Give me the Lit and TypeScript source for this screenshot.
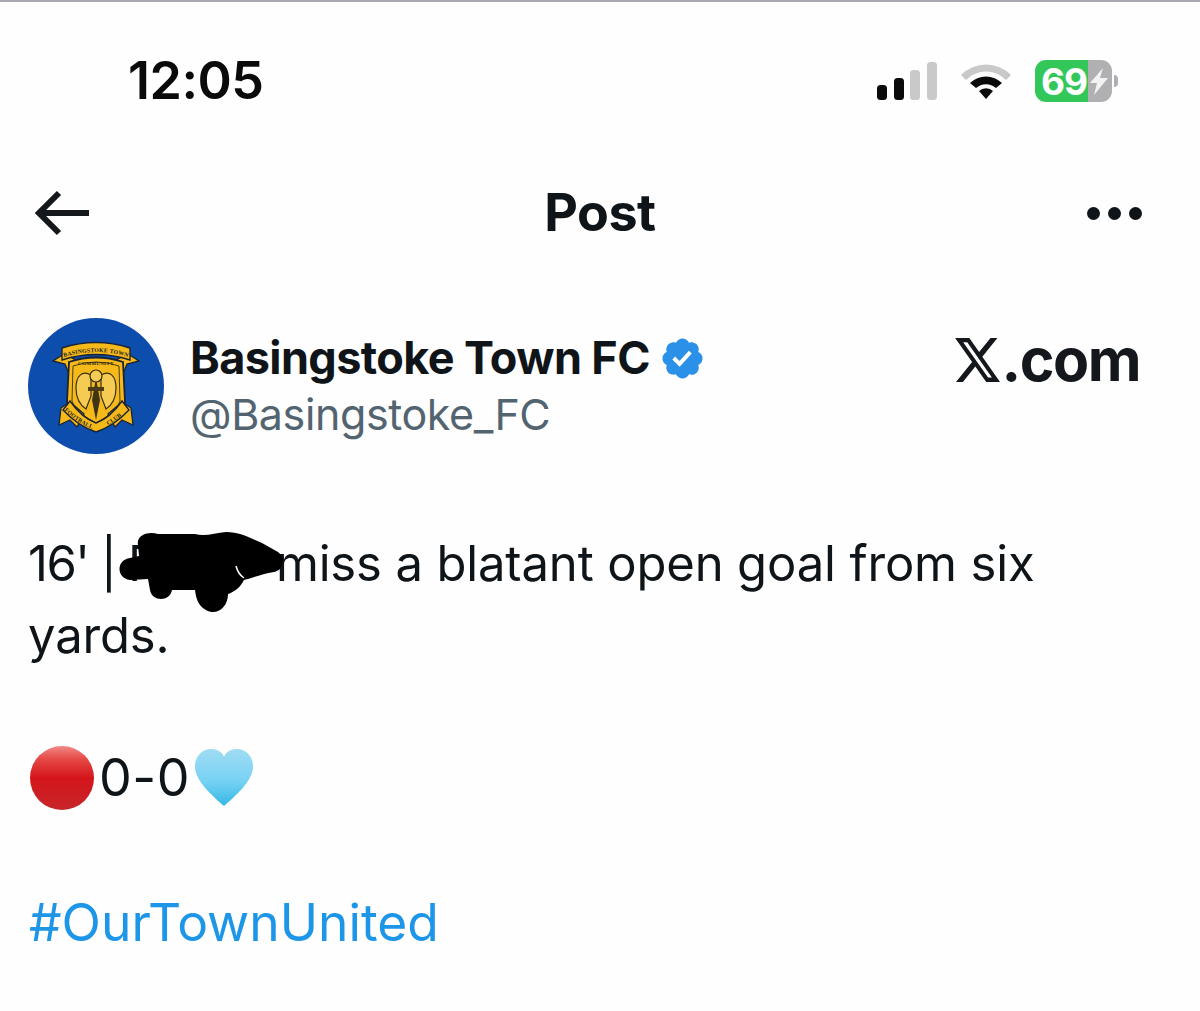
import { LitElement, html, css, svg } from "lit";
import { customElement } from "lit/decorators.js";

const crest = svg`
<svg class="crest" viewBox="0 0 136 136" width="136" height="136" aria-hidden="true">
  <circle cx="68" cy="68" r="68" fill="#0d4dab"/>
  <path d="M36 36 L25 43 L37 46 L41 56 L48 42 Z" fill="#f5b91a" stroke="#1c2433" stroke-width="1.3"/>
  <path d="M100 36 L111 43 L99 46 L95 56 L88 42 Z" fill="#f5b91a" stroke="#1c2433" stroke-width="1.3"/>
  <path d="M34 30 Q68 19 102 30 L102 42 Q68 31 34 42 Z" fill="#f5b91a" stroke="#1c2433" stroke-width="1.4"/>
  <path d="M41 44 Q68 35 95 44 L97 84 Q94 98 68 110 Q42 98 39 84 Z" fill="#f5b91a" stroke="#1c2433" stroke-width="1.8"/>
  <path d="M45 48 Q68 40 91 48 L92 83 Q89 94 68 105 Q47 94 44 83 Z" fill="none" stroke="#4a3c14" stroke-width="1"/>
  <path d="M63 57 C54 52 48 58 48 70 C48 80 52 87 58 91 L63 78 Z" fill="#f6cb52" stroke="#3a3014" stroke-width="1.2"/>
  <path d="M73 57 C82 52 88 58 88 70 C88 80 84 87 78 91 L73 78 Z" fill="#f6cb52" stroke="#3a3014" stroke-width="1.2"/>
  <path d="M68 60 L72 82 L68 102 L64 82 Z" fill="#3e3416"/>
  <circle cx="68" cy="58" r="6" fill="#f6cb52" stroke="#3a3014" stroke-width="1.2"/>
  <path d="M60 69 H76 V73 H60 Z" fill="#4a3c14"/>
  <path d="M42 84 L33 90 L31 107 L42 102 L49 109 L56 96 Z" fill="#f5b91a" stroke="#1c2433" stroke-width="1.3"/>
  <path d="M94 84 L103 90 L105 107 L94 102 L87 109 L80 96 Z" fill="#f5b91a" stroke="#1c2433" stroke-width="1.3"/>
  <path d="M42 83 Q54 100 68 105 Q82 100 94 83 L101 92 Q86 108 68 114 Q50 108 35 92 Z" fill="#f5b91a" stroke="#1c2433" stroke-width="1.4"/>
  <path id="tp" d="M28 42 Q68 26 108 42" fill="none"/>
  <path id="bl" d="M34 90 Q50 106 67 112" fill="none"/>
  <path id="br" d="M70 112 Q86 106 102 90" fill="none"/>
  <text class="ct"><textPath href="#tp" startOffset="50%" text-anchor="middle">BASINGSTOKE TOWN</textPath></text>
  <text class="ct2" x="68" y="47" text-anchor="middle">COMMUNITY</text>
  <text class="ct"><textPath href="#bl" startOffset="50%" text-anchor="middle">FOOTBALL</textPath></text>
  <text class="ct"><textPath href="#br" startOffset="50%" text-anchor="middle">CLUB</textPath></text>
</svg>`;

@customElement("app-root")
export class AppRoot extends LitElement {
  static styles = css`
    :host {
      display: block;
      width: 1200px;
      height: 1011px;
      background: #fefefe;
      color: #0f1419;
      font-family: Inter, "Liberation Sans", sans-serif;
      overflow: hidden;
    }
    .edge { height: 2px; background: #a8a8b0; }
    .status {
      display: flex;
      align-items: center;
      height: 158px;
      padding: 0 82px 0 128px;
      box-sizing: border-box;
      justify-content: space-between;
    }
    .time { font-size: 52px; font-weight: 600; color: #0a0a0a; line-height: 1; letter-spacing: -0.5px; }
    .sys { display: flex; align-items: center; gap: 23px; }
    .battery { display: flex; align-items: center; gap: 2px; }
    .cell {
      position: relative;
      width: 77px; height: 42px; border-radius: 11px; overflow: hidden;
      background: linear-gradient(90deg, #33c75a 0 69%, #b0b0b2 69%);
      display: flex; align-items: center;
      color: #fff; font-size: 37px; font-weight: 700; line-height: 1; letter-spacing: -1px; padding-left: 6px; box-sizing: border-box;
    }
    .bolt { position: absolute; right: 4px; top: 8px; }
    .nub { width: 4px; height: 12px; border-radius: 0 4px 4px 0; background: #b0b0b2; }
    .nav {
      display: grid;
      grid-template-columns: 1fr auto 1fr;
      align-items: center;
      height: 100px;
      margin-top: 3px;
      padding: 0 35px;
    }
    .nav h1 { margin: 0; font-size: 52px; font-weight: 700; letter-spacing: -0.5px; line-height: 1; }
    .dots { justify-self: end; display: flex; gap: 8px; margin-right: 23px; }
    .dots i { width: 13px; height: 13px; border-radius: 50%; background: #0f1419; }
    .author {
      display: flex;
      align-items: center;
      margin-top: 55px;
      padding: 0 60px 0 28px;
      gap: 26px;
    }
    .crest { flex: none; display: block; }
    .ct { font: 700 5.8px "Liberation Serif", serif; fill: #1c1c14; letter-spacing: .2px; }
    .ct2 { font: 700 5px "Liberation Serif", serif; fill: #1c1c14; letter-spacing: .3px; }
    .names { flex: 1; display: flex; flex-direction: column; gap: 4px; }
    .name { display: flex; align-items: center; gap: 9px; font-size: 45px; font-weight: 700; line-height: 52px; letter-spacing: -0.6px; }
    .name svg { flex: none; margin-top: 1px; }
    .handle { font-size: 43px; line-height: 52px; color: #536471; letter-spacing: -0.4px; }
    .wordmark { align-self: flex-start; display: flex; align-items: center; gap: 2px; margin-top: 12px; font-size: 59px; font-weight: 700; line-height: 1; letter-spacing: -1.5px; color: #14181c; }
    .post {
      margin: 74px 0 0;
      padding: 0 28px;
      font-size: 49px;
      line-height: 72px;
      color: #0f1419;
      letter-spacing: -0.15px;
    }
    .post p { margin: 0 0 72px; }
    .lead { letter-spacing: -1.5px; }
    .redact-wrap { position: relative; display: inline-block; width: 148px; height: 1em; line-height: 1em; }
    .redact { position: absolute; left: -10px; top: -9px; }
    .post .score { display: flex; align-items: center; gap: 4px; padding-left: 1px; font-size: 52px; letter-spacing: .5px; margin-top: -2px; }
    .score svg { flex: none; }
    .post .tag { color: #1d96e8; font-size: 51.5px; letter-spacing: 0; padding-left: 1px; }
  `;

  render() {
    return html`
      <div class="edge"></div>
      <div class="status">
        <span class="time">12:05</span>
        <div class="sys">
          <svg width="60" height="38" viewBox="0 0 60 38" aria-hidden="true">
            <rect x="0" y="23" width="10" height="15" rx="3.5" fill="#0a0a0a"/>
            <rect x="17" y="16" width="10" height="22" rx="3.5" fill="#0a0a0a"/>
            <rect x="33" y="8" width="10" height="30" rx="3.5" fill="#c9c9c9"/>
            <rect x="50" y="0" width="10" height="38" rx="3.5" fill="#c9c9c9"/>
          </svg>
          <svg width="52" height="38" viewBox="0 0 52 38" aria-hidden="true">
            <path d="M1 13 A35 35 0 0 1 51 13 L46 18 A28 28 0 0 0 6 18 Z" fill="#c9c9c9"/>
            <path d="M10 21 A23 23 0 0 1 42 21 L36 26 A15 15 0 0 0 16 26 Z" fill="#0a0a0a"/>
            <path d="M19 29 A10 10 0 0 1 33 29 L26 37 Z" fill="#0a0a0a"/>
          </svg>
          <div class="battery">
            <div class="cell">69
              <svg class="bolt" width="18" height="27" viewBox="0 0 18 27" aria-hidden="true">
                <path d="M13 0 L0 15 H7 L4 27 L18 10 H10 Z" fill="#f2f2f2"/>
              </svg>
            </div>
            <i class="nub"></i>
          </div>
        </div>
      </div>
      <div class="nav">
        <svg width="56" height="46" viewBox="0 0 56 46" aria-hidden="true">
          <path d="M54 23 H5 M24 3 L4 23 L24 43" fill="none" stroke="#14181c" stroke-width="6"/>
        </svg>
        <h1>Post</h1>
        <div class="dots"><i></i><i></i><i></i></div>
      </div>
      <div class="author">
        ${crest}
        <div class="names">
          <div class="name">Basingstoke Town FC
            <svg width="47" height="47" viewBox="0 0 22 22" aria-hidden="true">
              <path fill="#2b91e8" d="M20.396 11c-.018-.646-.215-1.275-.57-1.816-.354-.54-.852-.972-1.438-1.246.223-.607.27-1.264.14-1.897-.131-.634-.437-1.218-.882-1.687-.47-.445-1.053-.75-1.687-.882-.633-.13-1.29-.083-1.897.14-.273-.587-.704-1.086-1.245-1.44S11.647 1.62 11 1.604c-.646.017-1.273.213-1.813.568s-.969.854-1.24 1.44c-.608-.223-1.267-.272-1.902-.14-.635.13-1.22.436-1.69.882-.445.47-.749 1.055-.878 1.688-.13.633-.08 1.29.144 1.896-.587.274-1.087.705-1.443 1.245-.356.54-.555 1.17-.574 1.817.02.647.218 1.276.574 1.817.356.54.856.972 1.443 1.245-.224.606-.274 1.263-.144 1.896.13.634.433 1.218.877 1.688.47.443 1.054.747 1.687.878.633.132 1.29.084 1.897-.136.274.586.705 1.084 1.246 1.439.54.354 1.17.551 1.816.569.647-.016 1.276-.213 1.817-.567s.972-.854 1.245-1.44c.604.239 1.266.296 1.903.164.636-.132 1.22-.447 1.68-.907.46-.46.776-1.044.908-1.681s.075-1.299-.165-1.903c.586-.274 1.084-.705 1.439-1.246.354-.54.551-1.17.569-1.816z"/>
              <path fill="#fff" d="M9.662 14.85l-3.429-3.428 1.293-1.302 2.072 2.072 4.4-4.794 1.347 1.246z"/>
            </svg>
          </div>
          <div class="handle">@Basingstoke_FC</div>
        </div>
        <div class="wordmark">
          <svg width="45" height="44" viewBox="1.2 2.25 21.6 19.5" preserveAspectRatio="none" aria-hidden="true">
            <path fill="#14181c" d="M18.244 2.25h3.308l-7.227 8.26 8.502 11.24H16.17l-5.214-6.817L4.99 21.75H1.68l7.73-8.835L1.254 2.25H8.08l4.713 6.231zm-1.161 17.52h1.833L7.084 4.126H5.117z"/>
          </svg>
          <span>.com</span>
        </div>
      </div>
      <div class="post">
        <p><span class="lead">16' | </span><span class="redact-wrap">F
          <svg class="redact" width="170" height="90" viewBox="118 530 170 90" aria-hidden="true">
            <path fill="#000" d="M138 545 C136 534 150 531 158 534 L195 534 C205 537 215 533 226 532 C240 532 250 538 262 543 L278 552 C286 558 284 570 274 572 C262 574 252 578 244 580 C240 588 234 592 228 594 C228 608 216 616 206 610 C198 606 196 598 195 590 L172 590 C170 602 152 602 150 590 L148 579 L130 580 C116 578 116 560 130 558 L139 556 Z"/>
            <path d="M236 566 Q238 574 244 578" fill="none" stroke="#fff" stroke-width="1.5"/>
          </svg>
        </span>miss a blatant open goal from six<br />yards.</p>
        <p class="score">
          <svg width="66" height="66" viewBox="0 0 66 66" aria-label="red circle">
            <defs>
              <linearGradient id="red" x1="0" y1="0" x2="0" y2="1">
                <stop offset="0" stop-color="#f08a88"/><stop offset=".2" stop-color="#e64a47"/>
                <stop offset=".5" stop-color="#d4151a"/><stop offset="1" stop-color="#c7262a"/>
              </linearGradient>
            </defs>
            <circle cx="33" cy="33" r="32" fill="url(#red)"/>
          </svg>
          <span>0-0</span>
          <svg width="60" height="60" viewBox="0 0 62 62" aria-label="light blue heart">
            <defs>
              <linearGradient id="blue" x1="0" y1="0" x2="0" y2="1">
                <stop offset="0" stop-color="#9fdcf3"/><stop offset=".55" stop-color="#78d2f4"/>
                <stop offset="1" stop-color="#35b8e4"/>
              </linearGradient>
            </defs>
            <path d="M31 60 C20 50 1 34 1 19 C1 8 9 1 18 1 C24 1 29 4 31 9 C33 4 38 1 44 1 C53 1 61 8 61 19 C61 34 42 50 31 60 Z" fill="url(#blue)"/>
          </svg>
        </p>
        <p class="tag">#OurTownUnited</p>
      </div>
    `;
  }
}
